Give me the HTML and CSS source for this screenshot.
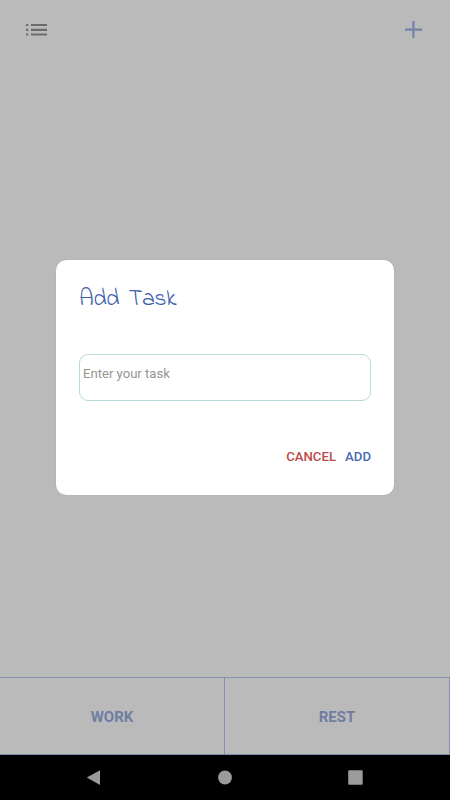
FILE: index.html
```html
<!DOCTYPE html>
<html lang="en">
<head>
    <meta charset="UTF-8">
    <meta name="viewport" content="width=device-width, initial-scale=1.0">
    <title>Tasks</title>
    <link rel="stylesheet" href="styles.css">
</head>
<body>
    <div class="app">
        <header class="top-bar">
            <svg class="icon-list" viewBox="0 0 21 12" width="21" height="12">
                <path d="M0 1h2.2M0 5.8h2.2M0 10.5h2.2M5 1h16M5 5.8h16M5 10.5h16" />
            </svg>
            <svg class="icon-plus" viewBox="0 0 17 18" width="17" height="18">
                <path d="M8.4 0v17M0 8.6h17" />
            </svg>
        </header>

        <main class="task-list"></main>

        <div class="tabs">
            <button class="tab">WORK</button>
            <button class="tab">REST</button>
        </div>

        <!-- System navigation -->
        <nav class="nav-bar">
            <svg viewBox="0 0 16 16" width="16" height="16">
                <path d="M15 0.2v14.8L1.8 7.6z" />
            </svg>
            <svg viewBox="0 0 16 16" width="16" height="16">
                <circle cx="8" cy="7.5" r="6.9" />
            </svg>
            <svg viewBox="0 0 16 16" width="16" height="16">
                <rect x="0.2" y="0.2" width="14.5" height="14.6" rx="1" />
            </svg>
        </nav>
    </div>

    <!-- Add task dialog -->
    <div class="overlay">
        <div class="dialog">
            <h1>Add Task</h1>
            <input type="text" placeholder="Enter your task">
            <div class="actions">
                <button class="cancel">CANCEL</button>
                <button class="add">ADD</button>
            </div>
        </div>
    </div>
</body>
</html>
```

FILE: styles.css
```css
* {
    box-sizing: border-box;
}

body {
    margin: 0;
    font-family: Roboto, sans-serif;
    background-color: #bababa;
}

button {
    padding: 0;
    border: none;
    background: none;
    font-family: inherit;
}

.app {
    display: flex;
    flex-direction: column;
    height: 800px;
}

.top-bar {
    display: flex;
    justify-content: space-between;
    align-items: center;
    height: 60px;
    padding: 0 28px 0 26px;
}

.icon-list path {
    stroke: #6c6c6c;
    stroke-width: 2.2;
}

.icon-plus path {
    stroke: #7482a8;
    stroke-width: 2.2;
}

.task-list {
    flex: 1;
}

.tabs {
    display: flex;
    height: 78px;
    border-top: 1px solid #8691ad;
    border-bottom: 1px solid #7e8eb0;
}

.tab {
    flex: 1;
    padding-top: 2px;
    border-right: 1px solid #8691ad;
    color: #707da3;
    font-size: 15px;
    font-weight: 700;
}

.nav-bar {
    display: flex;
    justify-content: space-between;
    align-items: center;
    height: 45px;
    padding: 0 86px 0 85px;
    background-color: #000;
}

.nav-bar svg {
    fill: #9b9b9b;
}

.overlay {
    position: absolute;
    top: 0;
    left: 0;
    width: 100%;
    height: 800px;
    padding-top: 260px;
}

.dialog {
    width: 338px;
    height: 235px;
    margin: 0 auto;
    padding: 25px 23px 0;
    background-color: #fff;
    border-radius: 10px;
    box-shadow: 0 0 1px rgba(0, 0, 0, 0.2);
}

h1 {
    margin: 0 0 39px;
    color: #3f62ad;
    font-family: "Indie Flower", Lato, sans-serif;
    font-size: 24px;
    font-weight: 300;
    letter-spacing: -0.6px;
    word-spacing: 4.5px;
    line-height: 30px;
}

input {
    display: block;
    width: 100%;
    height: 47px;
    padding: 0 3px 8px;
    border: 1px solid #b9dadb;
    border-radius: 9px;
    outline: none;
    font-family: inherit;
    font-size: 13.1px;
}

input::placeholder {
    color: #949494;
}

.actions {
    display: flex;
    justify-content: flex-end;
    gap: 9px;
    margin-top: 47px;
}

.actions button {
    font-size: 13.2px;
    font-weight: 500;
    line-height: 18px;
}

.cancel {
    color: #b94a4a;
}

.add {
    color: #466ab3;
}
```
